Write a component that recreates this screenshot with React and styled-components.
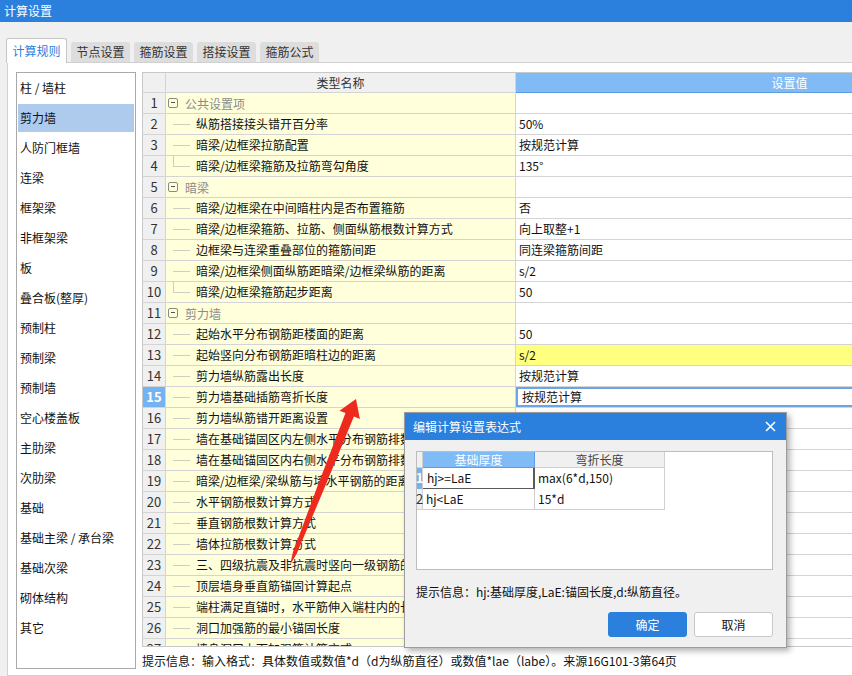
import React from "react";
import styled, { createGlobalStyle, css } from "styled-components";

const GlobalStyle = createGlobalStyle`
  html, body { margin: 0; padding: 0; }
  body {
    background: #f0f0f0;
    font-family: "Noto Sans CJK SC", "Noto Sans", sans-serif;
    font-size: 12px;
    color: #111;
    overflow: hidden;
    width: 852px;
    height: 676px;
  }
  * { box-sizing: border-box; }
`;

const Window = styled.div`
  position: relative;
  width: 852px;
  height: 676px;
  overflow: hidden;
  background: #f0f0f0;
`;

const TitleBar = styled.div`
  height: 22px;
  background: #2b7fdd;
  color: #fff;
  font-size: 12px;
  line-height: 22px;
  padding-left: 4px;
`;

const TabStrip = styled.div`
  display: flex;
  align-items: flex-end;
  gap: 4px;
  height: 40px;
  padding-left: 6px;
`;

const Tab = styled.div`
  text-align: center;
  font-size: 12px;
  border-radius: 3px 3px 0 0;
  ${(p) =>
    p.$active
      ? css`
          position: relative;
          z-index: 1;
          width: 61px;
          height: 25px;
          margin-bottom: -1px;
          line-height: 24px;
          background: #fff;
          color: #2b7fdd;
          border: 1px solid #c6c6c6;
          border-bottom: none;
        `
      : css`
          width: 59px;
          height: 20px;
          line-height: 20px;
          background: #dddddd;
          color: #333;
        `}
`;

const Panel = styled.div`
  margin-left: 7px;
  width: 1200px;
  height: 614px;
  background: #fff;
  border: 1px solid #d0d0d0;
  border-right: none;
  display: flex;
  gap: 6px;
  padding: 9px 0 0 8px;
`;

const ListBox = styled.div`
  width: 120px;
  height: 597px;
  border: 1px solid #a9a9a9;
  padding: 1px;
  display: flex;
  flex-direction: column;
  gap: 2px;
`;

const ListItem = styled.div`
  height: 28px;
  line-height: 28px;
  padding-left: 2px;
  color: #111;
  white-space: nowrap;
  background: ${(p) => (p.$selected ? "#aecbee" : "transparent")};
`;

const RightCol = styled.div`
  display: flex;
  flex-direction: column;
  width: 930px;
`;

const TableBox = styled.div`
  height: 575px;
  border: 1px solid #c8c8c8;
  overflow: hidden;
  background: #fff;
`;

const Row = styled.div`
  display: grid;
  grid-template-columns: 23px 350px 548px;
  height: ${(p) => (p.$head ? 20 : p.$partial ? 8 : 21)}px;
  overflow: hidden;
`;

const cellBase = css`
  border-right: 1px solid #d4d4d4;
  border-bottom: 1px solid #d4d4d4;
  white-space: nowrap;
  overflow: hidden;
`;

const NumCell = styled.div`
  ${cellBase};
  text-align: center;
  font-size: 13px;
  line-height: 20px;
  background: ${(p) => (p.$sel ? "#74b2f2" : "#f0f0f0")};
  color: ${(p) => (p.$sel ? "#fff" : "#333")};
  font-weight: ${(p) => (p.$sel ? 700 : 400)};
`;

const HeadCell = styled.div`
  ${cellBase};
  text-align: center;
  line-height: 19px;
  background: ${(p) => (p.$blue ? "#80bbf6" : "#f0f0f0")};
  color: ${(p) => (p.$blue ? "#fff" : "#333")};
  ${(p) => p.$blue && css`border-bottom-color: #5c9de4;`}
`;

const NameCell = styled.div`
  ${cellBase};
  background: #ffffdc;
  display: flex;
  align-items: ${(p) => (p.$partial ? "flex-start" : "center")};
  height: ${(p) => (p.$partial ? "21px" : "auto")};
  position: relative;
`;

const ValueCell = styled.div`
  ${cellBase};
  line-height: 20px;
  padding-left: 3px;
  background: ${(p) => (p.$hl ? "#ffff80" : "#fff")};
  ${(p) =>
    p.$edit &&
    css`
      box-shadow: inset 0 0 0 2px #6aa6e6;
      padding-left: 6px;
    `}
`;

const CollapseBox = styled.span`
  position: relative;
  width: 10px;
  height: 10px;
  margin-left: 2px;
  border: 1px solid #8a8a8a;
  border-radius: 2px;
  flex-shrink: 0;
  &::after {
    content: "";
    position: absolute;
    left: 2px;
    right: 2px;
    top: 3px;
    height: 1px;
    background: #555;
  }
`;

const GroupLabel = styled.span`
  margin-left: 7px;
  color: #8c8c8c;
`;

const TreeGuide = styled.span`
  position: relative;
  width: 30px;
  height: 100%;
  flex-shrink: 0;
  &::before {
    content: "";
    display: ${(p) => (p.$last ? "block" : "none")};
    position: absolute;
    left: 7px;
    top: 0;
    height: 50%;
    width: 1px;
    background: #cfcfc0;
  }
  &::after {
    content: "";
    position: absolute;
    left: 7px;
    top: 50%;
    width: 17px;
    height: 1px;
    background: #cfcfc0;
  }
`;

const ItemLabel = styled.span`
  color: #111;
  line-height: 20px;
  ${(p) =>
    p.$partial &&
    css`
      display: block;
      height: 8px;
      overflow: hidden;
    `}
`;

const StatusLine = styled.div`
  margin-top: 4px;
  line-height: 20px;
  color: #111;
  white-space: nowrap;
`;

/* Dialog */
const Dialog = styled.div`
  position: absolute;
  left: 404px;
  top: 412px;
  width: 383px;
  height: 236px;
  background: #f0f0f0;
  border: 1px solid #9c9c9c;
  box-shadow: 3px 3px 6px rgba(0, 0, 0, 0.3);
  display: flex;
  flex-direction: column;
`;

const DlgTitle = styled.div`
  height: 27px;
  background: #2b7fdd;
  color: #fff;
  line-height: 27px;
  padding: 0 10px 0 8px;
  display: flex;
  justify-content: space-between;
  align-items: center;
`;

const DlgBody = styled.div`
  padding: 11px 13px 0 11px;
  display: flex;
  flex-direction: column;
`;

const DlgGridBox = styled.div`
  width: 357px;
  height: 119px;
  background: #fff;
  border: 1px solid #bdbdbd;
`;

const DlgRow = styled.div`
  display: grid;
  grid-template-columns: 6px 112px 130px;
  height: ${(p) => (p.$head ? 16 : 21)}px;
`;

const DlgCell = styled.div`
  border-right: 1px solid #d0d0d0;
  border-bottom: 1px solid #d0d0d0;
  white-space: nowrap;
  line-height: ${(p) => (p.$head ? 15 : 20)}px;
  padding-left: ${(p) => (p.$head ? 0 : 3)}px;
  text-align: ${(p) => (p.$head ? "center" : "left")};
  background: ${(p) => (p.$blue ? "#80bbf6" : p.$gray ? "#f0f0f0" : "#fff")};
  color: ${(p) => (p.$blue ? "#fff" : p.$head ? "#444" : "#111")};
  ${(p) => p.$blue && p.$head && css`border: 1px solid #5c9de4; border-top: none; border-left: none;`}
  ${(p) =>
    p.$focus &&
    css`
      border-right: 2px solid #5a5a5a;
      border-bottom: 2px solid #5a5a5a;
      padding-left: 4px;
    `}
`;

const DlgNum = styled.div`
  border-right: 1px solid #d0d0d0;
  border-bottom: 1px solid #d0d0d0;
  font-size: 13px;
  line-height: 20px;
  overflow: visible;
  display: flex;
  justify-content: center;
  background: ${(p) => (p.$sel ? "#74b2f2" : "#f0f0f0")};
  color: ${(p) => (p.$sel ? "#fff" : "#333")};
  font-weight: ${(p) => (p.$sel ? 700 : 400)};
`;

const DlgHint = styled.div`
  margin-top: 12px;
  line-height: 20px;
  color: #111;
  white-space: nowrap;
`;

const BtnRow = styled.div`
  margin-top: 10px;
  display: flex;
  justify-content: flex-end;
  gap: 7px;
`;

const Btn = styled.div`
  width: 79px;
  height: 25px;
  line-height: 23px;
  text-align: center;
  border-radius: 3px;
  border: 1px solid ${(p) => (p.$primary ? "#2b7fdd" : "#c8c8c8")};
  background: ${(p) => (p.$primary ? "#2b7fdd" : "#fff")};
  color: ${(p) => (p.$primary ? "#fff" : "#111")};
`;

const ArrowLayer = styled.svg`
  position: absolute;
  left: 0;
  top: 0;
  pointer-events: none;
`;

const leftItems = [
  "柱 / 墙柱", "剪力墙", "人防门框墙", "连梁", "框架梁", "非框架梁", "板",
  "叠合板(整厚)", "预制柱", "预制梁", "预制墙", "空心楼盖板", "主肋梁",
  "次肋梁", "基础", "基础主梁 / 承台梁", "基础次梁", "砌体结构", "其它",
];

const rows = [
  { g: "公共设置项" },
  { n: "纵筋搭接接头错开百分率", v: "50%" },
  { n: "暗梁/边框梁拉筋配置", v: "按规范计算" },
  { n: "暗梁/边框梁箍筋及拉筋弯勾角度", v: "135°", last: true },
  { g: "暗梁" },
  { n: "暗梁/边框梁在中间暗柱内是否布置箍筋", v: "否" },
  { n: "暗梁/边框梁箍筋、拉筋、侧面纵筋根数计算方式", v: "向上取整+1" },
  { n: "边框梁与连梁重叠部位的箍筋间距", v: "同连梁箍筋间距" },
  { n: "暗梁/边框梁侧面纵筋距暗梁/边框梁纵筋的距离", v: "s/2" },
  { n: "暗梁/边框梁箍筋起步距离", v: "50", last: true },
  { g: "剪力墙" },
  { n: "起始水平分布钢筋距楼面的距离", v: "50" },
  { n: "起始竖向分布钢筋距暗柱边的距离", v: "s/2", hl: true },
  { n: "剪力墙纵筋露出长度", v: "按规范计算" },
  { n: "剪力墙基础插筋弯折长度", v: "按规范计算", sel: true },
  { n: "剪力墙纵筋错开距离设置", v: "" },
  { n: "墙在基础锚固区内左侧水平分布钢筋排数", v: "2" },
  { n: "墙在基础锚固区内右侧水平分布钢筋排数", v: "2" },
  { n: "暗梁/边框梁/梁纵筋与墙水平钢筋的距离", v: "" },
  { n: "水平钢筋根数计算方式", v: "" },
  { n: "垂直钢筋根数计算方式", v: "" },
  { n: "墙体拉筋根数计算方式", v: "" },
  { n: "三、四级抗震及非抗震时竖向一级钢筋的弯钩", v: "" },
  { n: "顶层墙身垂直筋锚固计算起点", v: "" },
  { n: "端柱满足直锚时，水平筋伸入端柱内的长度", v: "" },
  { n: "洞口加强筋的最小锚固长度", v: "" },
  { n: "墙身洞口上下加强筋计算方式", v: "", partial: true },
];

export default function App() {
  return (
    <Window>
      <GlobalStyle />
      <TitleBar>计算设置</TitleBar>
      <TabStrip>
        <Tab $active>计算规则</Tab>
        <Tab>节点设置</Tab>
        <Tab>箍筋设置</Tab>
        <Tab>搭接设置</Tab>
        <Tab>箍筋公式</Tab>
      </TabStrip>
      <Panel>
        <ListBox>
          {leftItems.map((t, i) => (
            <ListItem key={t} $selected={i === 1}>{t}</ListItem>
          ))}
        </ListBox>
        <RightCol>
          <TableBox>
            <Row $head>
              <HeadCell />
              <HeadCell>类型名称</HeadCell>
              <HeadCell $blue>设置值</HeadCell>
            </Row>
            {rows.map((r, i) => (
              <Row key={i} $partial={r.partial}>
                <NumCell $sel={r.sel}>{i + 1}</NumCell>
                <NameCell $partial={r.partial}>
                  {r.g ? (
                    <>
                      <CollapseBox />
                      <GroupLabel>{r.g}</GroupLabel>
                    </>
                  ) : (
                    <>
                      <TreeGuide $last={r.last} />
                      <ItemLabel $partial={r.partial}>{r.n}</ItemLabel>
                    </>
                  )}
                </NameCell>
                <ValueCell $hl={r.hl} $edit={r.sel}>{r.v}</ValueCell>
              </Row>
            ))}
          </TableBox>
          <StatusLine>
            提示信息：输入格式：具体数值或数值*d（d为纵筋直径）或数值*lae（labe）。来源16G101-3第64页
          </StatusLine>
        </RightCol>
      </Panel>

      <ArrowLayer width="852" height="676" viewBox="0 0 852 676">
        <polygon
          points="290,565 296.7,553.7 323.1,491.2 353.9,416.5 359.9,418.9 356,399 339.5,410.7 345.5,413.1 316.6,488.6 292.9,552.3"
          fill="#ee2a1e"
        />
      </ArrowLayer>

      <Dialog>
        <DlgTitle>
          <span>编辑计算设置表达式</span>
          <svg width="11" height="11" viewBox="0 0 11 11">
            <path d="M1 1 L10 10 M10 1 L1 10" stroke="#fff" strokeWidth="1.6" />
          </svg>
        </DlgTitle>
        <DlgBody>
          <DlgGridBox>
            <DlgRow $head>
              <DlgCell $head $gray />
              <DlgCell $head $blue>基础厚度</DlgCell>
              <DlgCell $head $gray>弯折长度</DlgCell>
            </DlgRow>
            <DlgRow>
              <DlgNum $sel>1</DlgNum>
              <DlgCell $focus>hj&gt;=LaE</DlgCell>
              <DlgCell>max(6*d,150)</DlgCell>
            </DlgRow>
            <DlgRow>
              <DlgNum>2</DlgNum>
              <DlgCell>hj&lt;LaE</DlgCell>
              <DlgCell>15*d</DlgCell>
            </DlgRow>
          </DlgGridBox>
          <DlgHint>提示信息：hj:基础厚度,LaE:锚固长度,d:纵筋直径。</DlgHint>
          <BtnRow>
            <Btn $primary>确定</Btn>
            <Btn>取消</Btn>
          </BtnRow>
        </DlgBody>
      </Dialog>
    </Window>
  );
}
